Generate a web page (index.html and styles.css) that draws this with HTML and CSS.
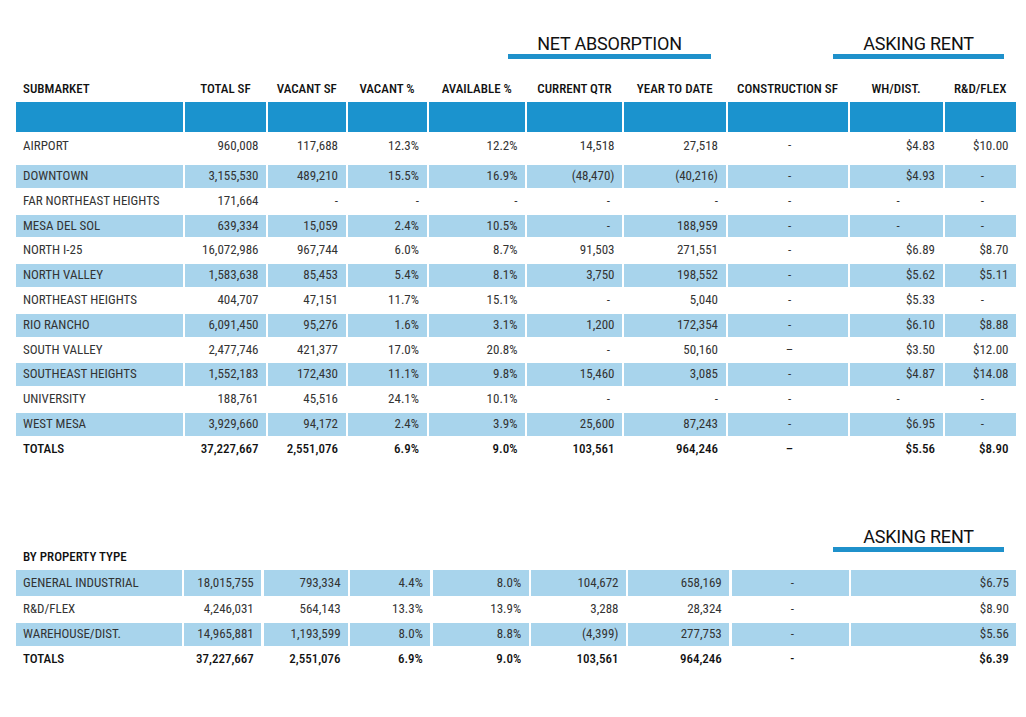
FILE: index.html
```html
<!DOCTYPE html>
<html lang="en">
<head>
<meta charset="utf-8">
<title>Industrial Market Statistics</title>
<link rel="stylesheet" href="styles.css">
</head>
<body>
<div class="page">
  <section class="top">
    <div class="group-heads">
      <div class="ghead ghead-net">NET ABSORPTION</div>
      <div class="ghead ghead-rent">ASKING RENT</div>
    </div>

    <div class="row t10 colhead">
      <div class="l">SUBMARKET</div><div>TOTAL SF</div><div>VACANT SF</div><div>VACANT %</div><div>AVAILABLE %</div><div>CURRENT QTR</div><div>YEAR TO DATE</div><div>CONSTRUCTION SF</div><div>WH/DIST.</div><div>R&amp;D/FLEX</div>
    </div>
    <div class="row t10 band">
      <div></div><div></div><div></div><div></div><div></div><div></div><div></div><div></div><div></div><div></div>
    </div>

    <div class="row t10 data first">
      <div class="l">AIRPORT</div><div>960,008</div><div>117,688</div><div>12.3%</div><div>12.2%</div><div>14,518</div><div>27,518</div><div class="m">-</div><div>$4.83</div><div>$10.00</div>
    </div>
    <div class="row t10 data alt">
      <div class="l">DOWNTOWN</div><div>3,155,530</div><div>489,210</div><div>15.5%</div><div>16.9%</div><div>(48,470)</div><div>(40,216)</div><div class="m">-</div><div>$4.93</div><div class="m">-</div>
    </div>
    <div class="row t10 data">
      <div class="l">FAR NORTHEAST HEIGHTS</div><div>171,664</div><div>-</div><div>-</div><div>-</div><div class="dq">-</div><div>-</div><div class="m">-</div><div class="m">-</div><div class="m">-</div>
    </div>
    <div class="row t10 data alt">
      <div class="l">MESA DEL SOL</div><div>639,334</div><div>15,059</div><div>2.4%</div><div>10.5%</div><div class="dq">-</div><div>188,959</div><div class="m">-</div><div class="m">-</div><div class="m">-</div>
    </div>
    <div class="row t10 data">
      <div class="l">NORTH I-25</div><div>16,072,986</div><div>967,744</div><div>6.0%</div><div>8.7%</div><div>91,503</div><div>271,551</div><div class="m">-</div><div>$6.89</div><div>$8.70</div>
    </div>
    <div class="row t10 data alt">
      <div class="l">NORTH VALLEY</div><div>1,583,638</div><div>85,453</div><div>5.4%</div><div>8.1%</div><div>3,750</div><div>198,552</div><div class="m">-</div><div>$5.62</div><div>$5.11</div>
    </div>
    <div class="row t10 data">
      <div class="l">NORTHEAST HEIGHTS</div><div>404,707</div><div>47,151</div><div>11.7%</div><div>15.1%</div><div class="dq">-</div><div>5,040</div><div class="m">-</div><div>$5.33</div><div class="m">-</div>
    </div>
    <div class="row t10 data alt">
      <div class="l">RIO RANCHO</div><div>6,091,450</div><div>95,276</div><div>1.6%</div><div>3.1%</div><div>1,200</div><div>172,354</div><div class="m">-</div><div>$6.10</div><div>$8.88</div>
    </div>
    <div class="row t10 data">
      <div class="l">SOUTH VALLEY</div><div>2,477,746</div><div>421,377</div><div>17.0%</div><div>20.8%</div><div class="dq">-</div><div>50,160</div><div class="m">–</div><div>$3.50</div><div>$12.00</div>
    </div>
    <div class="row t10 data alt">
      <div class="l">SOUTHEAST HEIGHTS</div><div>1,552,183</div><div>172,430</div><div>11.1%</div><div>9.8%</div><div>15,460</div><div>3,085</div><div class="m">-</div><div>$4.87</div><div>$14.08</div>
    </div>
    <div class="row t10 data">
      <div class="l">UNIVERSITY</div><div>188,761</div><div>45,516</div><div>24.1%</div><div>10.1%</div><div class="dq">-</div><div>-</div><div class="m">-</div><div class="m">-</div><div class="m">-</div>
    </div>
    <div class="row t10 data alt">
      <div class="l">WEST MESA</div><div>3,929,660</div><div>94,172</div><div>2.4%</div><div>3.9%</div><div>25,600</div><div>87,243</div><div class="m">-</div><div>$6.95</div><div class="m">-</div>
    </div>
    <div class="row t10 data totals">
      <div class="l">TOTALS</div><div>37,227,667</div><div>2,551,076</div><div>6.9%</div><div>9.0%</div><div>103,561</div><div>964,246</div><div class="m">–</div><div>$5.56</div><div>$8.90</div>
    </div>
  </section>

  <section class="bottom">
    <div class="group-heads group-heads-bottom">
      <div class="ghead ghead-rent">ASKING RENT</div>
    </div>
    <div class="bylabel">BY PROPERTY TYPE</div>

    <div class="row t9 data alt tall">
      <div class="l">GENERAL INDUSTRIAL</div><div>18,015,755</div><div>793,334</div><div>4.4%</div><div>8.0%</div><div>104,672</div><div>658,169</div><div class="m">-</div><div>$6.75</div>
    </div>
    <div class="row t9 data">
      <div class="l">R&amp;D/FLEX</div><div>4,246,031</div><div>564,143</div><div>13.3%</div><div>13.9%</div><div>3,288</div><div>28,324</div><div class="m">-</div><div>$8.90</div>
    </div>
    <div class="row t9 data alt">
      <div class="l">WAREHOUSE/DIST.</div><div>14,965,881</div><div>1,193,599</div><div>8.0%</div><div>8.8%</div><div>(4,399)</div><div>277,753</div><div class="m">-</div><div>$5.56</div>
    </div>
    <div class="row t9 data totals">
      <div class="l">TOTALS</div><div>37,227,667</div><div>2,551,076</div><div>6.9%</div><div>9.0%</div><div>103,561</div><div>964,246</div><div class="m">-</div><div>$6.39</div>
    </div>
  </section>
</div>
</body>
</html>
```

FILE: styles.css
```css
html, body {
  margin: 0;
  padding: 0;
  background: #ffffff;
}

body {
  font-family: "Roboto", "Liberation Sans", sans-serif;
  font-stretch: 75%;
  color: #333333;
}

.page {
  width: 1000px;
  padding: 34px 10px 0 16px;
}

.group-heads {
  display: flex;
  padding-left: 492px;
  column-gap: 122px;
}

.group-heads-bottom {
  padding-left: 817px;
}

.ghead {
  font-size: 18px;
  font-stretch: 100%;
  letter-spacing: -0.2px;
  line-height: 20px;
  height: 20px;
  text-align: center;
  color: #111111;
  border-bottom: 5px solid #1f91cb;
  white-space: nowrap;
}

.ghead-net {
  width: 203px;
}

.ghead-rent {
  width: 171px;
}

.row {
  display: grid;
  column-gap: 2px;
  margin-top: 2px;
}

.t10 {
  grid-template-columns: 167px 81px 77.5px 79px 96.5px 95px 101.5px 120px 93px 71.5px;
}

.t9 {
  grid-template-columns: 166px 77px 84.5px 80px 96px 95px 101px 117.5px 165px;
  column-gap: 2.3px;
}

.row > div {
  white-space: nowrap;
  overflow: hidden;
}

.colhead {
  margin-top: 18px;
  height: 23px;
  font-size: 13px;
  font-weight: 500;
  line-height: 23px;
  color: #111111;
}

.colhead > div {
  text-align: center;
}

.colhead > div.l {
  text-align: left;
  padding-left: 7px;
}

.band {
  height: 30px;
}

.band > div {
  background: #1b93ce;
}

.data {
  height: 22.8px;
  font-size: 13px;
  line-height: 22.8px;
}

.data > div {
  text-align: right;
  padding: 0 7.5px 0 7px;
}

.data > div.l {
  text-align: left;
}

.data > div.m {
  text-align: center;
  padding: 0 0 0 4px;
}

.data > div.dq {
  padding-right: 12px;
}

.first {
  height: 29px;
}

.first > div {
  padding-top: 1px;
}

.alt > div {
  background: #a8d4ec;
}

.totals {
  font-weight: 500;
  color: #111111;
}

.bottom {
  margin-top: 66.4px;
}

.bylabel {
  font-size: 13px;
  font-weight: 500;
  line-height: 10px;
  height: 10px;
  padding-left: 7px;
  margin-bottom: 8px;
  color: #111111;
}

.tall {
  height: 26px;
  line-height: 26px;
}
```
